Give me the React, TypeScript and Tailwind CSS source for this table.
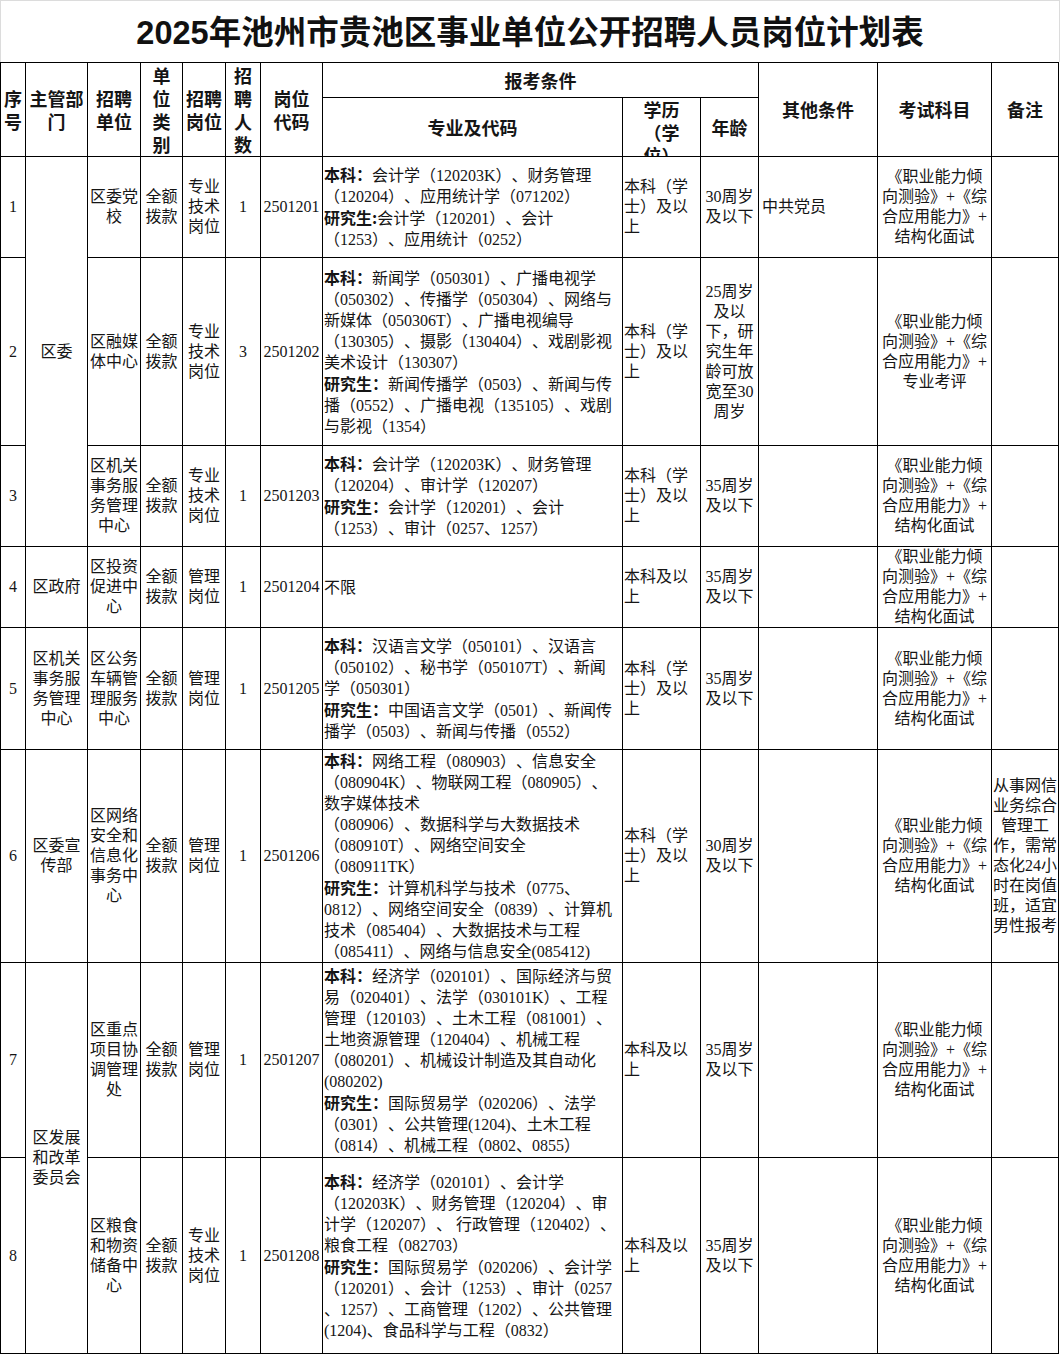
import React from 'react';

type Line = string | [string, string];

interface Row {
  no: string;
  dept?: { lines: string[]; span: number };
  unit: string[];
  post: string[];
  num: string;
  code: string;
  major: Line[];
  edu: string[];
  age: string[];
  other: string;
  exam: string[];
  note: string[];
}

const EXAM_A = ['《职业能力倾', '向测验》+《综', '合应用能力》+', '结构化面试'];
const EXAM_B = ['《职业能力倾', '向测验》+《综', '合应用能力》+', '专业考评'];
const EDU_A = ['本科（学', '士）及以', '上'];
const EDU_B = ['本科及以', '上'];

const rows: Row[] = [
  {
    no: '1',
    dept: { lines: ['区委'], span: 3 },
    unit: ['区委党', '校'],
    post: ['专业', '技术', '岗位'],
    num: '1',
    code: '2501201',
    major: [
      ['本科：', '会计学（120203K）、财务管理'],
      '（120204）、应用统计学（071202）',
      ['研究生:', '会计学（120201）、会计'],
      '（1253）、应用统计（0252）',
    ],
    edu: EDU_A,
    age: ['30周岁', '及以下'],
    other: '中共党员',
    exam: EXAM_A,
    note: [],
  },
  {
    no: '2',
    unit: ['区融媒', '体中心'],
    post: ['专业', '技术', '岗位'],
    num: '3',
    code: '2501202',
    major: [
      ['本科：', '新闻学（050301）、广播电视学'],
      '（050302）、传播学（050304）、网络与',
      '新媒体（050306T）、广播电视编导',
      '（130305）、摄影（130404）、戏剧影视',
      '美术设计（130307）',
      ['研究生：', '新闻传播学（0503）、新闻与传'],
      '播（0552）、广播电视（135105）、戏剧',
      '与影视（1354）',
    ],
    edu: EDU_A,
    age: ['25周岁', '及以', '下，研', '究生年', '龄可放', '宽至30', '周岁'],
    other: '',
    exam: EXAM_B,
    note: [],
  },
  {
    no: '3',
    unit: ['区机关', '事务服', '务管理', '中心'],
    post: ['专业', '技术', '岗位'],
    num: '1',
    code: '2501203',
    major: [
      ['本科：', '会计学（120203K）、财务管理'],
      '（120204）、审计学（120207）',
      ['研究生：', '会计学（120201）、会计'],
      '（1253）、审计（0257、1257）',
    ],
    edu: EDU_A,
    age: ['35周岁', '及以下'],
    other: '',
    exam: EXAM_A,
    note: [],
  },
  {
    no: '4',
    dept: { lines: ['区政府'], span: 1 },
    unit: ['区投资', '促进中', '心'],
    post: ['管理', '岗位'],
    num: '1',
    code: '2501204',
    major: ['不限'],
    edu: EDU_B,
    age: ['35周岁', '及以下'],
    other: '',
    exam: EXAM_A,
    note: [],
  },
  {
    no: '5',
    dept: { lines: ['区机关', '事务服', '务管理', '中心'], span: 1 },
    unit: ['区公务', '车辆管', '理服务', '中心'],
    post: ['管理', '岗位'],
    num: '1',
    code: '2501205',
    major: [
      ['本科：', '汉语言文学（050101）、汉语言'],
      '（050102）、秘书学（050107T）、新闻',
      '学（050301）',
      ['研究生：', '中国语言文学（0501）、新闻传'],
      '播学（0503）、新闻与传播（0552）',
    ],
    edu: EDU_A,
    age: ['35周岁', '及以下'],
    other: '',
    exam: EXAM_A,
    note: [],
  },
  {
    no: '6',
    dept: { lines: ['区委宣', '传部'], span: 1 },
    unit: ['区网络', '安全和', '信息化', '事务中', '心'],
    post: ['管理', '岗位'],
    num: '1',
    code: '2501206',
    major: [
      ['本科：', '网络工程（080903）、信息安全'],
      '（080904K）、物联网工程（080905）、',
      '数字媒体技术',
      '（080906）、数据科学与大数据技术',
      '（080910T）、网络空间安全',
      '（080911TK）',
      ['研究生：', '计算机科学与技术（0775、'],
      '0812）、网络空间安全（0839）、计算机',
      '技术（085404）、大数据技术与工程',
      '（085411）、网络与信息安全(085412)',
    ],
    edu: EDU_A,
    age: ['30周岁', '及以下'],
    other: '',
    exam: EXAM_A,
    note: ['从事网信', '业务综合', '管理工', '作，需常', '态化24小', '时在岗值', '班，适宜', '男性报考'],
  },
  {
    no: '7',
    dept: { lines: ['区发展', '和改革', '委员会'], span: 2 },
    unit: ['区重点', '项目协', '调管理', '处'],
    post: ['管理', '岗位'],
    num: '1',
    code: '2501207',
    major: [
      ['本科：', '经济学（020101）、国际经济与贸'],
      '易（020401）、法学（030101K）、工程',
      '管理（120103）、土木工程（081001）、',
      '土地资源管理（120404）、机械工程',
      '（080201）、机械设计制造及其自动化',
      '(080202)',
      ['研究生：', '国际贸易学（020206）、法学'],
      '（0301）、公共管理(1204)、土木工程',
      '（0814）、机械工程（0802、0855）',
    ],
    edu: EDU_B,
    age: ['35周岁', '及以下'],
    other: '',
    exam: EXAM_A,
    note: [],
  },
  {
    no: '8',
    unit: ['区粮食', '和物资', '储备中', '心'],
    post: ['专业', '技术', '岗位'],
    num: '1',
    code: '2501208',
    major: [
      ['本科：', '经济学（020101）、会计学'],
      '（120203K）、财务管理（120204）、审',
      '计学（120207）、 行政管理（120402）、',
      '粮食工程（082703）',
      ['研究生：', '国际贸易学（020206）、会计学'],
      '（120201）、会计（1253）、审计（0257',
      '、1257）、工商管理（1202）、公共管理',
      '(1204)、食品科学与工程（0832）',
    ],
    edu: EDU_B,
    age: ['35周岁', '及以下'],
    other: '',
    exam: EXAM_A,
    note: [],
  },
];

const spanClass: Record<number, string> = {
  1: '',
  2: 'row-span-2',
  3: 'row-span-3',
};

function Lines({ lines }: { lines: string[] }) {
  return (
    <>
      {lines.map((l, i) => (
        <div key={i} className="whitespace-nowrap">
          {l}
        </div>
      ))}
    </>
  );
}

const cellC =
  'bg-white flex flex-col items-center justify-center text-center text-[16px] leading-[20px] overflow-hidden';
const headC =
  "bg-white flex flex-col items-center justify-center text-center text-[18px] leading-[23px] font-bold font-[family-name:'Noto_Sans_CJK_SC','Liberation_Sans',sans-serif] overflow-hidden";

export default function App() {
  return (
    <div className="w-[1061px] h-[1355px] bg-white text-[#151515] [text-spacing-trim:space-all] font-[family-name:'Liberation_Serif','Noto_Sans_CJK_SC',serif]">
      <div className="h-[62px] w-[1060px] border-t border-l border-r border-[#dcdcdc] flex items-center justify-center">
        <div className="text-[32.5px] leading-none font-bold text-[#111] font-[family-name:'Liberation_Sans','Noto_Sans_CJK_SC',sans-serif] pt-[4px]">
          2025年池州市贵池区事业单位公开招聘人员岗位计划表
        </div>
      </div>
      <div className="w-[1059px] grid grid-cols-[24px_61px_52px_41px_42px_34px_61px_299px_77px_57px_118px_113px_66px] grid-rows-[34px_58px_100px_187px_100px_80px_121px_212px_194px_195px] gap-px bg-black border border-black">
        {/* header row 1 */}
        <div className={`${headC} row-span-2`}>
          <div>序</div>
          <div>号</div>
        </div>
        <div className={`${headC} row-span-2`}>
          <div>主管部</div>
          <div>门</div>
        </div>
        <div className={`${headC} row-span-2`}>
          <div>招聘</div>
          <div>单位</div>
        </div>
        <div className={`${headC} row-span-2`}>
          <div>单</div>
          <div>位</div>
          <div>类</div>
          <div>别</div>
        </div>
        <div className={`${headC} row-span-2`}>
          <div>招聘</div>
          <div>岗位</div>
        </div>
        <div className={`${headC} row-span-2`}>
          <div>招</div>
          <div>聘</div>
          <div>人</div>
          <div>数</div>
        </div>
        <div className={`${headC} row-span-2`}>
          <div>岗位</div>
          <div>代码</div>
        </div>
        <div className={`${headC} col-span-3`}>
          <div>报考条件</div>
        </div>
        <div className={`${headC} row-span-2`}>
          <div>其他条件</div>
        </div>
        <div className={`${headC} row-span-2`}>
          <div>考试科目</div>
        </div>
        <div className={`${headC} row-span-2`}>
          <div>备注</div>
        </div>
        {/* header row 2 */}
        <div className={headC}>
          <div>专业及代码</div>
        </div>
        <div className="bg-white flex flex-col items-center justify-start text-center text-[18px] leading-[23px] font-bold font-[family-name:'Noto_Sans_CJK_SC','Liberation_Sans',sans-serif] overflow-hidden">
          <div>学历</div>
          <div>（学</div>
          <div>位）</div>
        </div>
        <div className={headC}>
          <div>年龄</div>
        </div>

        {rows.map((r) => (
          <React.Fragment key={r.no}>
            <div className={cellC}>{r.no}</div>
            {r.dept && (
              <div className={`${cellC} ${spanClass[r.dept.span]}`}>
                <Lines lines={r.dept.lines} />
              </div>
            )}
            <div className={cellC}>
              <Lines lines={r.unit} />
            </div>
            <div className={cellC}>
              <Lines lines={['全额', '拨款']} />
            </div>
            <div className={`${cellC} leading-[19px]`}>
              <Lines lines={r.post} />
            </div>
            <div className={cellC}>{r.num}</div>
            <div className={cellC}>{r.code}</div>
            <div className="bg-white flex flex-col justify-center items-start text-left text-[16px] leading-[21px] pl-[1px] overflow-hidden">
              {r.major.map((l, i) =>
                typeof l === 'string' ? (
                  <div key={i} className="whitespace-nowrap">
                    {l}
                  </div>
                ) : (
                  <div key={i} className="whitespace-nowrap">
                    <span className="font-bold font-[family-name:'Noto_Sans_CJK_SC',sans-serif]">{l[0]}</span>
                    {l[1]}
                  </div>
                )
              )}
            </div>
            <div className="bg-white flex flex-col justify-center items-start text-left text-[16px] leading-[20px] pl-[1px] overflow-hidden">
              <Lines lines={r.edu} />
            </div>
            <div className={cellC}>
              <Lines lines={r.age} />
            </div>
            <div className="bg-white flex flex-col justify-center items-start text-left text-[16px] leading-[20px] pl-[3px] overflow-hidden">
              {r.other}
            </div>
            <div className={`${cellC} leading-[20.5px]`}>
              <Lines lines={r.exam} />
            </div>
            <div className={`${cellC} leading-[19.5px]`}>
              <Lines lines={r.note} />
            </div>
          </React.Fragment>
        ))}
      </div>
    </div>
  );
}
